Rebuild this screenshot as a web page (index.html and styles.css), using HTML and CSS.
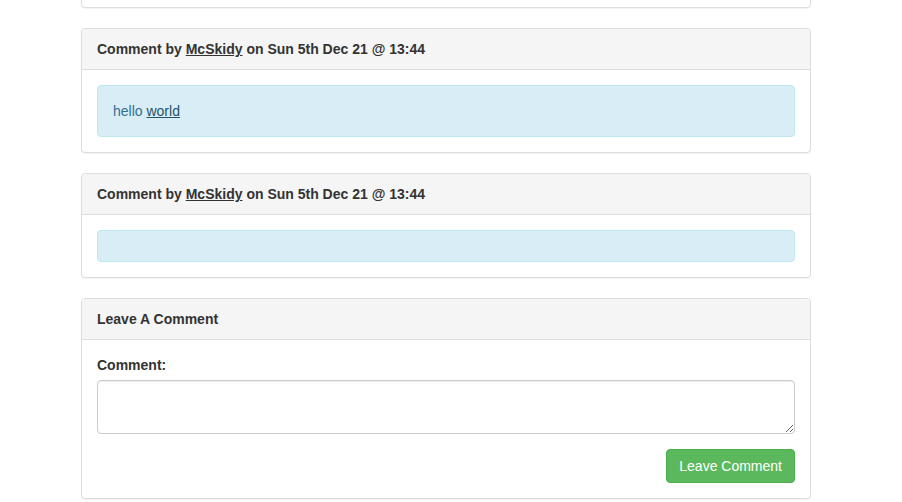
FILE: index.html
```html
<!DOCTYPE html>
<html lang="en">
<head>
<meta charset="utf-8">
<title>Comments</title>
<link rel="stylesheet" href="styles.css">
</head>
<body>
<div class="container">
  <div class="panel panel-prev">
    <div class="panel-body"></div>
  </div>

  <div class="panel">
    <div class="panel-heading">Comment by <a href="#" class="user">McSkidy</a> on Sun 5th Dec 21 @ 13:44</div>
    <div class="panel-body">
      <div class="alert">hello <a href="#" class="alert-link">world</a></div>
    </div>
  </div>

  <div class="panel">
    <div class="panel-heading">Comment by <a href="#" class="user">McSkidy</a> on Sun 5th Dec 21 @ 13:44</div>
    <div class="panel-body">
      <div class="alert alert-empty"></div>
    </div>
  </div>

  <div class="panel">
    <div class="panel-heading">Leave A Comment</div>
    <div class="panel-body">
      <form class="comment-form">
        <div class="form-group">
          <label class="label" for="comment">Comment:</label>
          <textarea id="comment" class="form-control" rows="2"></textarea>
        </div>
        <div class="actions">
          <button type="button" class="btn-success">Leave Comment</button>
        </div>
      </form>
    </div>
  </div>
</div>
</body>
</html>
```

FILE: styles.css
```css
* { box-sizing: border-box; }
html, body { margin: 0; padding: 0; background: #fff; }
body {
  font-family: "Liberation Sans", Arial, Helvetica, sans-serif;
  font-size: 14px;
  line-height: 20px;
  color: #333;
}
.container {
  width: 730px;
  margin-left: 81px;
}
.panel {
  background: #fff;
  border: 1px solid #ddd;
  border-radius: 4px;
  box-shadow: 0 1px 1px rgba(0,0,0,0.05);
  margin-bottom: 20px;
}
.panel-prev {
  height: 100px;
  margin-top: -92px;
}
.panel-heading {
  background: #f5f5f5;
  border-bottom: 1px solid #ddd;
  border-top-left-radius: 3px;
  border-top-right-radius: 3px;
  padding: 10px 15px;
  font-weight: bold;
  color: #333;
}
.user { color: #333; text-decoration: underline; }
.panel-body { padding: 15px; }
.alert {
  background: #d9edf7;
  border: 1px solid #bce8f1;
  border-radius: 4px;
  color: #31708f;
  padding: 15px;
  min-height: 32px;
}
.alert-link { color: #245269; text-decoration: underline; }
.form-group { margin-bottom: 15px; }
.label {
  display: block;
  font-weight: bold;
  margin-bottom: 5px;
}
.form-control {
  display: block;
  width: 100%;
  height: 54px;
  padding: 6px 12px;
  font-family: inherit;
  font-size: 14px;
  line-height: 20px;
  color: #555;
  background: #fff;
  border: 1px solid #ccc;
  border-radius: 4px;
  box-shadow: inset 0 1px 1px rgba(0,0,0,0.075);
  resize: vertical;
  margin: 0;
}
.actions { display: flex; justify-content: flex-end; }
.btn-success {
  font-family: inherit;
  font-size: 14px;
  line-height: 20px;
  padding: 6px 12px;
  height: 34px;
  color: #fff;
  background: #5cb85c;
  border: 1px solid #4cae4c;
  border-radius: 4px;
  cursor: pointer;
}
```
